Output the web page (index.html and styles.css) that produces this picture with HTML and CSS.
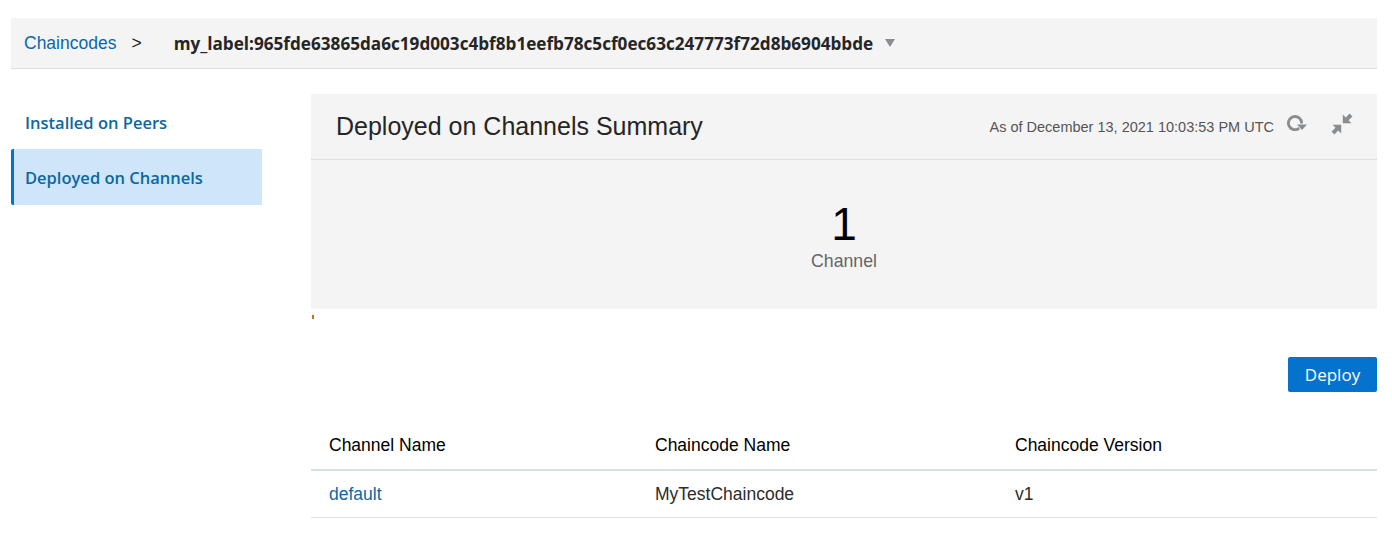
FILE: index.html
```html
<!DOCTYPE html>
<html lang="en">
<head>
  <meta charset="UTF-8">
  <title>Deployed on Channels</title>
  <link rel="stylesheet" href="styles.css">
</head>
<body>

<div class="page">
  <div class="topbar">
    <a class="crumb-link">Chaincodes</a>
    <span class="crumb-sep">&gt;</span>
    <span class="crumb-current">my_label:965fde63865da6c19d003c4bf8b1eefb78c5cf0ec63c247773f72d8b6904bbde</span>
    <span class="crumb-arrow"></span>
  </div>

  <div class="content">
    <div class="sidebar">
      <div class="side-item">Installed on Peers</div>
      <div class="side-item active">Deployed on Channels</div>
    </div>

    <div class="main">
      <div class="summary">
        <div class="summary-head">
          <h2>Deployed on Channels Summary</h2>
          <div class="summary-tools">
            <span class="as-of">As of December 13, 2021 10:03:53 PM UTC</span>
            <svg class="icon-refresh" width="22" height="20" viewBox="0 0 22 20">
              <path d="M12.2 14.2A6.6 6.6 0 1 1 14.6 9.5" fill="none" stroke="#8a8d8f" stroke-width="2.8"/>
              <path d="M10 10.5h10l-5 5.5z" fill="#8a8d8f"/>
            </svg>
            <svg class="icon-collapse" width="22" height="22" viewBox="0 0 22 22">
              <path d="M11.8 1.5l3 3 3.8-4 2.9 2.9-4 3.8 3 3h-8.7z" fill="#8a8d8f"/>
              <path d="M10.2 20.5l-3-3-3.8 4-2.9-2.9 4-3.8-3-3h8.7z" fill="#8a8d8f"/>
            </svg>
          </div>
        </div>
        <div class="summary-body">
          <div class="count">1</div>
          <div class="count-label">Channel</div>
        </div>
      </div>
      <div class="tick"></div>

      <div class="actions">
        <button class="btn-deploy">Deploy</button>
      </div>

      <table class="channels">
        <thead>
          <tr>
            <th class="col-a">Channel Name</th>
            <th class="col-b">Chaincode Name</th>
            <th>Chaincode Version</th>
          </tr>
        </thead>
        <tbody>
          <tr>
            <td><a class="link">default</a></td>
            <td>MyTestChaincode</td>
            <td>v1</td>
          </tr>
        </tbody>
      </table>
    </div>
  </div>
</div>

</body>
</html>
```

FILE: styles.css
```css
html, body {
  margin: 0;
  padding: 0;
  background: #fff;
}
body {
  font-family: "Liberation Sans", Arial, sans-serif;
  color: #2c2c2c;
  overflow: hidden;
}
.page {
  padding: 18px 15px 0 11px;
}
.topbar {
  display: flex;
  align-items: center;
  height: 50px;
  background: #f4f4f5;
  border-bottom: 1px solid #d9dfe3;
  padding-left: 13px;
  box-sizing: content-box;
}
.crumb-link {
  font-size: 17.5px;
  color: #0b67a9;
}
.crumb-sep {
  font-size: 17.5px;
  color: #222;
  margin-left: 15px;
}
.crumb-current {
  font-family: "Open Sans", sans-serif;
  font-size: 17.15px;
  font-weight: 700;
  color: #252525;
  margin-left: 32px;
}
.crumb-arrow {
  width: 0;
  height: 0;
  margin-left: 12px;
  border-left: 5.5px solid transparent;
  border-right: 5.5px solid transparent;
  border-top: 8px solid #8a8d8f;
}
.content {
  display: flex;
  padding-top: 25px;
}
.sidebar {
  width: 251px;
  margin-right: 49px;
  padding-top: 1px;
  flex: none;
}
.side-item {
  font-family: "Open Sans", sans-serif;
  font-size: 16.5px;
  font-weight: 600;
  color: #0b67a0;
  height: 56px;
  line-height: 56px;
  padding-left: 14px;
  margin-bottom: -2px;
}
.side-item.active {
  background: #cfe6fa;
  border-left: 3px solid #0572ce;
  border-radius: 2px 0 0 2px;
  line-height: 58px;
  padding-left: 11px;
}
.main {
  flex: 1;
}
.summary {
  background: #f4f4f5;
  height: 215px;
}
.summary-head {
  display: flex;
  align-items: center;
  justify-content: space-between;
  height: 65px;
  border-bottom: 1px solid #d9dfe3;
  padding: 0 24px 0 25px;
}
.summary-head h2 {
  margin: 0;
  font-size: 25px;
  font-weight: 400;
  color: #252525;
}
.summary-tools {
  display: flex;
  align-items: center;
}
.as-of {
  font-size: 14.5px;
  color: #555;
  margin-right: 13px;
}
.icon-refresh {
  margin-right: 22px;
  margin-bottom: 6px;
}
.icon-collapse {
  margin-bottom: 6px;
}
.summary-body {
  text-align: center;
}
.count {
  font-size: 46px;
  line-height: 53px;
  color: #000;
  padding-top: 38px;
}
.count-label {
  font-size: 17.7px;
  line-height: 20px;
  color: #666;
}
.tick {
  width: 2px;
  height: 4px;
  margin: 6px 0 0 1px;
  background: #c8701f;
}
.actions {
  display: flex;
  justify-content: flex-end;
  margin-top: 38px;
}
.btn-deploy {
  font-family: "Open Sans", sans-serif;
  font-size: 17px;
  width: 89px;
  height: 35px;
  padding: 0;
  border: none;
  border-radius: 2px;
  background: #0572ce;
  color: #fff;
}
.channels {
  width: 100%;
  border-collapse: collapse;
  margin-top: 30px;
  table-layout: fixed;
}
.channels th {
  font-weight: 400;
  font-size: 17.5px;
  color: #000;
  text-align: left;
  height: 46px;
  padding: 0 0 1px 18px;
  border-bottom: 2px solid #d6dfe3;
}
.channels td {
  font-size: 17.5px;
  height: 46px;
  padding: 0 0 0 18px;
  border-bottom: 1px solid #dfe1e2;
}
.col-a {
  width: 308px;
}
.col-b {
  width: 342px;
}
.link {
  color: #0a69a8;
}
```
